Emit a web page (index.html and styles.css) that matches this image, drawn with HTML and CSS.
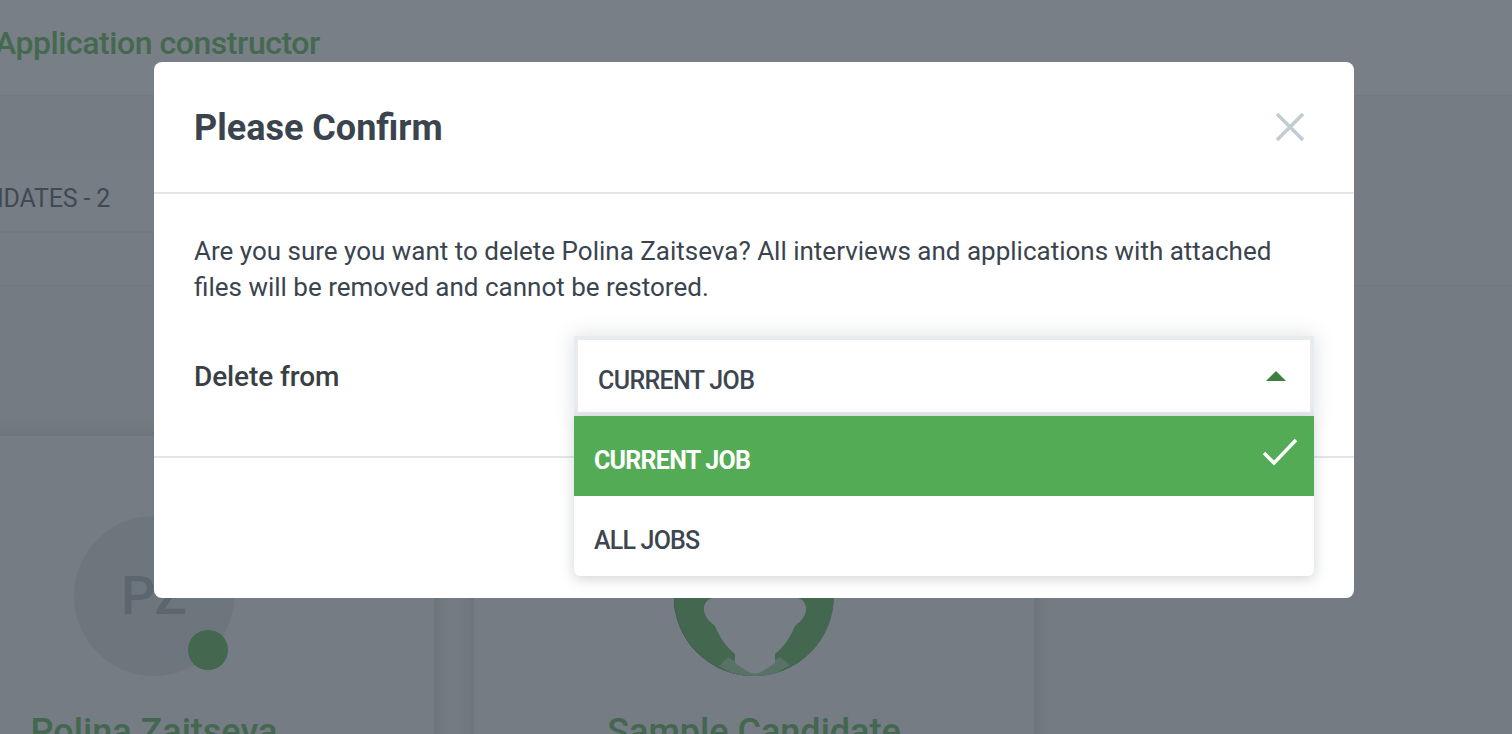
FILE: index.html
```html
<!DOCTYPE html>
<html lang="en">
<head>
<meta charset="utf-8">
<title>Please Confirm</title>
<link rel="stylesheet" href="styles.css">
</head>
<body>
<div class="page">
  <header class="topbar"><h1 class="page-title">Application constructor</h1></header>
  <nav class="tabs"><div class="tab"><span class="tab-label">CANDIDATES - 2</span></div></nav>
  <div class="filters"></div>
  <section class="cards">
    <article class="card">
      <div class="avatar avatar-initials">PZ<span class="status-dot"></span></div>
      <h2 class="card-name">Polina Zaitseva</h2>
    </article>
    <article class="card">
      <svg class="avatar" viewBox="0 0 160 160" aria-hidden="true">
        <defs><clipPath id="disc"><circle cx="80" cy="80" r="80"/></clipPath></defs>
        <circle cx="79.5" cy="80" r="80" fill="#3c4b4c"/>
        <circle cx="80" cy="80" r="80" fill="#43674f"/>
        <g clip-path="url(#disc)">
          <path d="M45 150 54 141 80 157 106 141 116 149 80 170Z" fill="#597268"/>
          <path d="M38 30V82C31 84 28 92 31 98 33 104 38 107 41 110 45 120 52 131 61 138V147L73 155Q81 160 89 155L101 147V138C110 131 117 120 121 110 124 107 129 104 131 98 134 92 131 84 124 82V30Z" fill="#767d84"/>
        </g>
      </svg>
      <h2 class="card-name">Sample Candidate</h2>
    </article>
  </section>
</div>

<div class="modal" role="dialog" aria-labelledby="modal-title">
  <div class="modal-header">
    <h3 class="modal-title" id="modal-title">Please Confirm</h3>
    <svg class="close-icon" viewBox="0 0 30 30" aria-label="Close"><path d="M2 2 28 28M28 2 2 28"/></svg>
  </div>
  <div class="modal-body">
    <p class="message">Are you sure you want to delete Polina Zaitseva? All interviews and applications with attached files will be removed and cannot be restored.</p>
    <div class="field">
      <label class="field-label">Delete from</label>
      <div class="select">
        <div class="select-control">
          <span>CURRENT JOB</span>
          <span class="caret"></span>
        </div>
        <ul class="select-menu">
          <li class="option option-selected">CURRENT JOB
            <svg class="check-icon" viewBox="0 0 36 30" aria-hidden="true"><path d="M2 16 12 26 34 3"/></svg>
          </li>
          <li class="option">ALL JOBS</li>
        </ul>
      </div>
    </div>
  </div>
  <div class="modal-footer"></div>
</div>
</body>
</html>
```
FILE: styles.css
```css
* { box-sizing: border-box; }
html, body { margin: 0; height: 100%; }
body {
  position: relative;
  overflow: hidden;
  background: #747b82;
  font-family: Roboto, "Liberation Sans", sans-serif;
  color: #3a444e;
}
.page { margin-left: -126px; width: 1638px; }
.topbar {
  height: 96px;
  padding: 23px 0 0 121px;
  background: #787f86;
  border-bottom: 1px solid #727980;
}
.page-title {
  margin: 0;
  font-size: 32px;
  line-height: 40px;
  font-weight: 500;
  letter-spacing: -0.45px;
  white-space: nowrap;
  color: #44694f;
}
.tabs { padding-top: 61px; height: 190px; border-bottom: 1px solid #6f767d; background: #757c83; }
.tab {
  height: 76px;
  padding-top: 26px;
  width: 700px;
  font-size: 25px;
  line-height: 30px;
  color: #3f4a52;
  background: #767d84;
  border-top: 1px solid #747b82;
  border-bottom: 2px solid #71787f;
}
.tab-label { display: block; width: 236px; text-align: right; white-space: nowrap; letter-spacing: -.2px; }
.filters { height: 150px; background: #747b82; }
.cards { display: flex; gap: 40px; }
.card {
  width: 560px;
  height: 400px;
  background: #757c83;
  box-shadow: 0 0 14px rgba(60, 68, 76, .22);
  padding-top: 80px;
  text-align: center;
}
.avatar { display: block; width: 160px; height: 160px; margin: 0 auto; }
.avatar-initials {
  position: relative;
  border-radius: 50%;
  background: #6e767d;
  color: #5b666e;
  font-size: 54px;
  font-weight: 500;
  line-height: 160px;
}
.status-dot {
  position: absolute;
  left: 114px;
  top: 114px;
  width: 40px;
  height: 40px;
  border-radius: 50%;
  background: #43674f;
}
.card-name {
  margin: 36px 0 0;
  font-size: 36px;
  line-height: 40px;
  font-weight: 500;
  white-space: nowrap;
  color: #43674f;
}
.modal {
  position: absolute;
  left: 154px;
  top: 62px;
  width: 1200px;
  height: 536px;
  background: #fff;
  border-radius: 8px;
  overflow: hidden;
}
.modal-header {
  height: 132px;
  padding: 0 49px 0 40px;
  display: flex;
  align-items: center;
  justify-content: space-between;
  border-bottom: 2px solid #e5e6e8;
}
.modal-title { margin: 2px 0 0; font-size: 36px; line-height: 40px; font-weight: 700; color: #3a444e; }
.close-icon { width: 30px; height: 30px; fill: none; stroke: #c1ccd1; stroke-width: 3.4; }
.modal-body { height: 264px; padding: 39px 40px 0; border-bottom: 2px solid #e5e6e8; }
.message { margin: 0; font-size: 26px; line-height: 36px; color: #3a444e; }
.field { display: flex; margin-top: 35px; padding-right: 4px; }
.field-label { width: 384px; padding-top: 19px; font-size: 28px; line-height: 36px; font-weight: 500; letter-spacing: -.1px; color: #3a3f44; }
.select { position: relative; width: 732px; }
.select-control {
  height: 72px;
  padding: 8px 24px 0 20px;
  display: flex;
  align-items: center;
  justify-content: space-between;
  background: #fff;
  font-size: 25px;
  letter-spacing: -.65px;
  font-weight: 500;
  color: #3d4650;
  box-shadow: 0 0 0 4px #e8ebee, 0 0 18px 6px rgba(70, 85, 100, .16);
}
.caret {
  width: 0;
  height: 0;
  margin-top: -8px;
  border-left: 10px solid transparent;
  border-right: 10px solid transparent;
  border-bottom: 10px solid #3e7f3f;
}
.select-menu {
  position: absolute;
  left: -4px;
  right: -4px;
  top: 76px;
  margin: 0;
  padding: 0;
  list-style: none;
  background: #fff;
  border-radius: 0 0 6px 6px;
  box-shadow: 0 3px 14px rgba(70, 85, 100, .25);
  overflow: hidden;
}
.option {
  height: 80px;
  padding: 8px 16px 0 20px;
  display: flex;
  align-items: center;
  justify-content: space-between;
  font-size: 25px;
  letter-spacing: -.8px;
  font-weight: 500;
  color: #3d4650;
}
.option-selected { background: #53ac55; color: #fff; font-weight: 700; letter-spacing: -.75px; }
.check-icon { width: 36px; height: 30px; margin-top: -16px; fill: none; stroke: #fff; stroke-width: 3.4; }
.modal-footer { height: 138px; }
```
